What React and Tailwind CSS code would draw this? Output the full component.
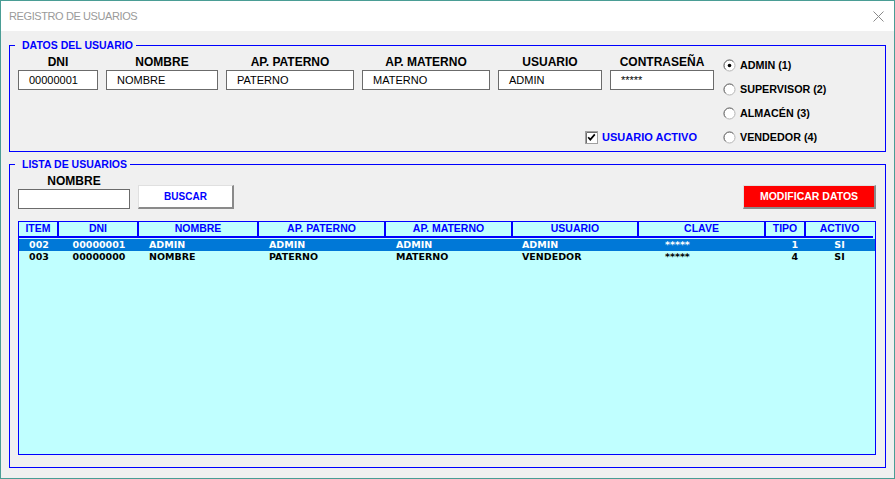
import React from "react";

const fields = [
  { label: "DNI", value: "00000001", w: "w-[80px]" },
  { label: "NOMBRE", value: "NOMBRE", w: "w-[112px]" },
  { label: "AP. PATERNO", value: "PATERNO", w: "w-[128px]" },
  { label: "AP. MATERNO", value: "MATERNO", w: "w-[128px]" },
  { label: "USUARIO", value: "ADMIN", w: "w-[104px]" },
  { label: "CONTRASEÑA", value: "*****", w: "w-[104px]" },
];

const roles = [
  { label: "ADMIN (1)", checked: true },
  { label: "SUPERVISOR (2)" },
  { label: "ALMACÉN (3)" },
  { label: "VENDEDOR (4)" },
];

const columns = ["ITEM", "DNI", "NOMBRE", "AP. PATERNO", "AP. MATERNO", "USUARIO", "CLAVE", "TIPO", "ACTIVO"];

const users = [
  { item: "002", dni: "00000001", nombre: "ADMIN", paterno: "ADMIN", materno: "ADMIN", usuario: "ADMIN", clave: "*****", tipo: "1", activo: "SI" },
  { item: "003", dni: "00000000", nombre: "NOMBRE", paterno: "PATERNO", materno: "MATERNO", usuario: "VENDEDOR", clave: "*****", tipo: "4", activo: "SI" },
];

const grid = "grid grid-cols-[40px_80px_120px_127px_127px_126px_127px_40px_67px]";

const Radio = ({ checked }) => (
  <svg width="13" height="13" viewBox="0 0 13 13">
    <circle cx="6.5" cy="6.5" r="5.5" fill="#fff" stroke="#b4b4b4" />
    <path d="M2.6 10.4 A5.5 5.5 0 0 1 10.4 2.6" fill="none" stroke="#6e6e6e" />
    {checked && <circle cx="6.5" cy="6.5" r="1.8" fill="#000" />}
  </svg>
);

const Checkbox = () => (
  <svg width="13" height="13" viewBox="0 0 13 13">
    <rect x="0.5" y="0.5" width="12" height="12" fill="#fff" stroke="#a0a0a0" />
    <path d="M1.5 12 V1.5 H12" fill="none" stroke="#6e6e6e" />
    <path d="M3.2 6.2 L5.3 8.6 L9.8 3.4" fill="none" stroke="#000" strokeWidth="1.7" />
  </svg>
);

const App = () => {
  return (
    <div className="w-[895px] h-[479px] flex flex-col border border-[#4a9d95] font-['Liberation_Sans',Arial,sans-serif] overflow-hidden">
      {/* barra de titulo */}
      <div className="h-[30px] bg-white flex items-center justify-between pl-[8px] pr-[10px]">
        <span className="text-[11px] tracking-[-0.4px] text-[#9a9a9a]">REGISTRO DE USUARIOS</span>
        <svg width="11" height="11" viewBox="0 0 11 11">
          <path d="M0.5 0.5 L10.5 10.5 M10.5 0.5 L0.5 10.5" stroke="#8a8a8a" strokeWidth="1" />
        </svg>
      </div>

      <div className="flex-1 bg-[#f0f0f0] px-[8px] pt-[8px]">
        {/* datos del usuario */}
        <fieldset className="border border-[#0000ff] p-0 m-0">
          <legend className="ml-[5px] pl-[7px] pr-[3px] text-[10.5px] leading-[12px] font-bold text-[#0000ff]">
            DATOS DEL USUARIO
          </legend>
          <div className="flex pl-[8px] pt-[2px] pb-[2px]">
            <div className="w-[696px] flex flex-col pt-[2px]">
              <div className="flex gap-[8px]">
                {fields.map((f) => (
                  <div key={f.label} className={`${f.w} flex flex-col`}>
                    <span className="text-[12px] leading-[14px] font-bold text-center text-black">{f.label}</span>
                    <div className="mt-[1px] h-[20px] border border-[#6b6b6b] bg-white pl-[10px] flex items-center text-[11px] text-black">
                      {f.value}
                    </div>
                  </div>
                ))}
              </div>
              <div className="mt-auto h-[24px] self-end mr-[17px] flex items-center gap-[4px]">
                <Checkbox />
                <span className="text-[11px] font-bold text-[#0000ff]">USUARIO ACTIVO</span>
              </div>
            </div>
            <div className="ml-[9px] flex flex-col">
              {roles.map((r) => (
                <div key={r.label} className="h-[24px] flex items-center gap-[4px]">
                  <Radio checked={r.checked} />
                  <span className="text-[10.75px] font-bold text-black">{r.label}</span>
                </div>
              ))}
            </div>
          </div>
        </fieldset>

        {/* lista de usuarios */}
        <fieldset className="mt-[6px] border border-[#0000ff] p-0 m-0">
          <legend className="ml-[5px] pl-[7px] pr-[3px] text-[10.5px] leading-[12px] font-bold text-[#0000ff]">
            LISTA DE USUARIOS
          </legend>
          <div className="pl-[8px] pr-[9px] pt-[4px] pb-[12px]">
            <div className="flex items-end">
              <div className="w-[112px] flex flex-col">
                <span className="text-[12px] leading-[14px] font-bold text-center text-black">NOMBRE</span>
                <div className="mt-[1px] h-[20px] border border-[#6b6b6b] bg-white" />
              </div>
              <button className="ml-[8px] w-[96px] h-[24px] bg-white border border-[#e0e0e0] border-b-2 border-r-2 border-b-[#8a8a8a] border-r-[#8a8a8a] text-[10px] font-bold text-[#0000ff]">
                BUSCAR
              </button>
              <button className="ml-auto w-[133px] h-[24px] bg-[#ff0000] border border-[#e0e0e0] border-b-2 border-r-2 border-b-[#8a8a8a] border-r-[#8a8a8a] text-[10.5px] font-bold text-white">
                MODIFICAR DATOS
              </button>
            </div>

            <div className="mt-[12px] h-[234px] border border-[#0000ff] bg-[#c0ffff]">
              <div className={grid}>
                {columns.map((c, i) => (
                  <div
                    key={c}
                    className={`h-[16px] border-b-2 border-[#0000ff] ${i < columns.length - 1 ? "border-r-2" : ""} flex items-center justify-center text-[10.5px] font-bold text-[#0000ff]`}
                  >
                    {c}
                  </div>
                ))}
              </div>
              <div className="pt-[1px] font-['DejaVu_Sans',sans-serif]">
                {users.map((u, i) => (
                  <div
                    key={u.item}
                    className={`${grid} h-[12px] text-[9.5px] leading-[12px] font-bold ${i === 0 ? "bg-[#0078d7] text-white" : "text-black"}`}
                  >
                    <span className="text-center">{u.item}</span>
                    <span className="text-center">{u.dni}</span>
                    <span className="pl-[10px]">{u.nombre}</span>
                    <span className="pl-[10px]">{u.paterno}</span>
                    <span className="pl-[10px]">{u.materno}</span>
                    <span className="pl-[9px]">{u.usuario}</span>
                    <span className="pl-[26px]">{u.clave}</span>
                    <span className="text-right pr-[8px]">{u.tipo}</span>
                    <span className="text-center">{u.activo}</span>
                  </div>
                ))}
              </div>
            </div>
          </div>
        </fieldset>
      </div>
    </div>
  );
};

export default App;
